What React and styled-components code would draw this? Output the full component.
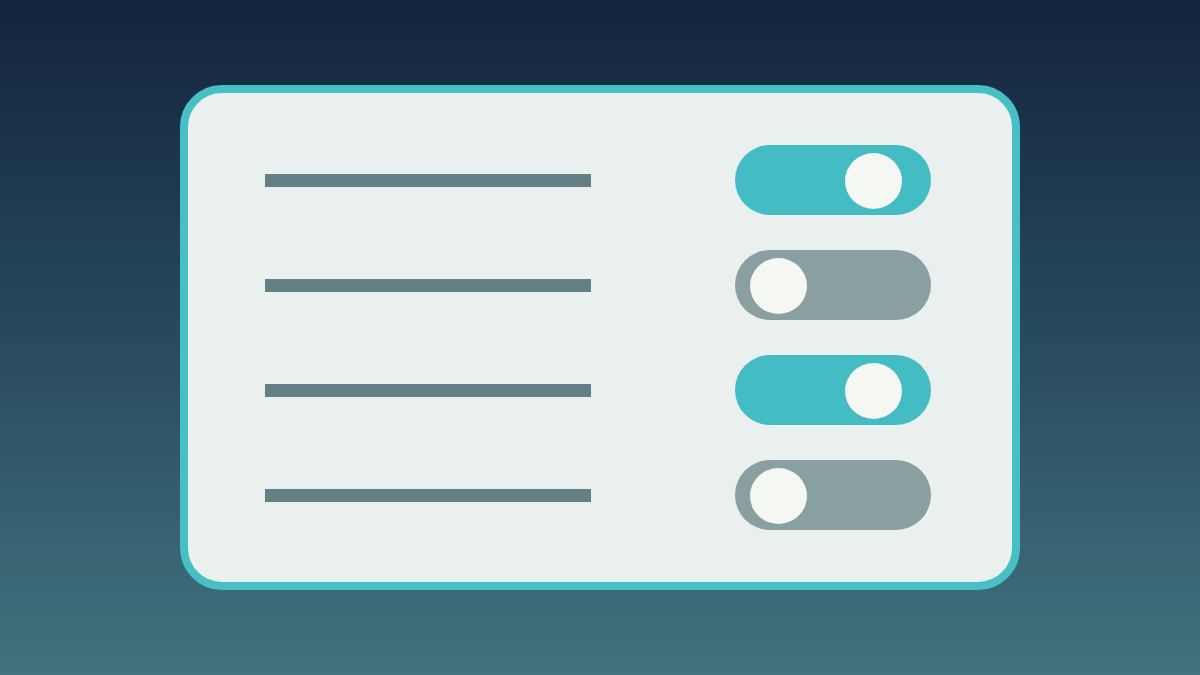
import React from "react";
import styled, { createGlobalStyle } from "styled-components";

const GlobalStyle = createGlobalStyle`
  html, body {
    margin: 0;
    padding: 0;
  }
  body {
    font-family: "Liberation Sans", Arial, sans-serif;
  }
`;

const Stage = styled.main`
  width: 1200px;
  height: 675px;
  display: flex;
  align-items: center;
  justify-content: center;
  background: linear-gradient(180deg, #12243d 0%, #284a5d 50%, #42737f 100%);
  overflow: hidden;
`;

const Panel = styled.section`
  box-sizing: border-box;
  width: 840px;
  height: 505px;
  border: 8px solid #46bfc5;
  border-radius: 42px;
  background: #e9f0ee;
  padding: 52px 81px 52px 77px;
  display: flex;
  flex-direction: column;
  gap: 35px;
`;

const Row = styled.div`
  height: 70px;
  display: flex;
  align-items: center;
  justify-content: space-between;
`;

const Label = styled.div`
  width: 326px;
  height: 13px;
  background: #648086;
  margin-top: 1px;
`;

const Switch = styled.button`
  box-sizing: border-box;
  width: 196px;
  height: 70px;
  border: none;
  border-radius: 35px;
  padding: ${({ $on }) => ($on ? "0 29px 0 0" : "0 0 0 15px")};
  display: flex;
  align-items: center;
  justify-content: ${({ $on }) => ($on ? "flex-end" : "flex-start")};
  background: ${({ $on }) => ($on ? "#43bdc3" : "#8a9fa1")};
  cursor: pointer;
`;

const Knob = styled.span`
  width: 57px;
  height: 56px;
  border-radius: 50%;
  background: #f5f7f3;
  margin-top: 1px;
`;

const settings = [true, false, true, false];

export default function App() {
  return (
    <>
      <GlobalStyle />
      <Stage>
        <Panel>
          {settings.map((on, i) => (
            <Row key={i}>
              <Label />
              <Switch $on={on} aria-pressed={on}>
                <Knob />
              </Switch>
            </Row>
          ))}
        </Panel>
      </Stage>
    </>
  );
}
